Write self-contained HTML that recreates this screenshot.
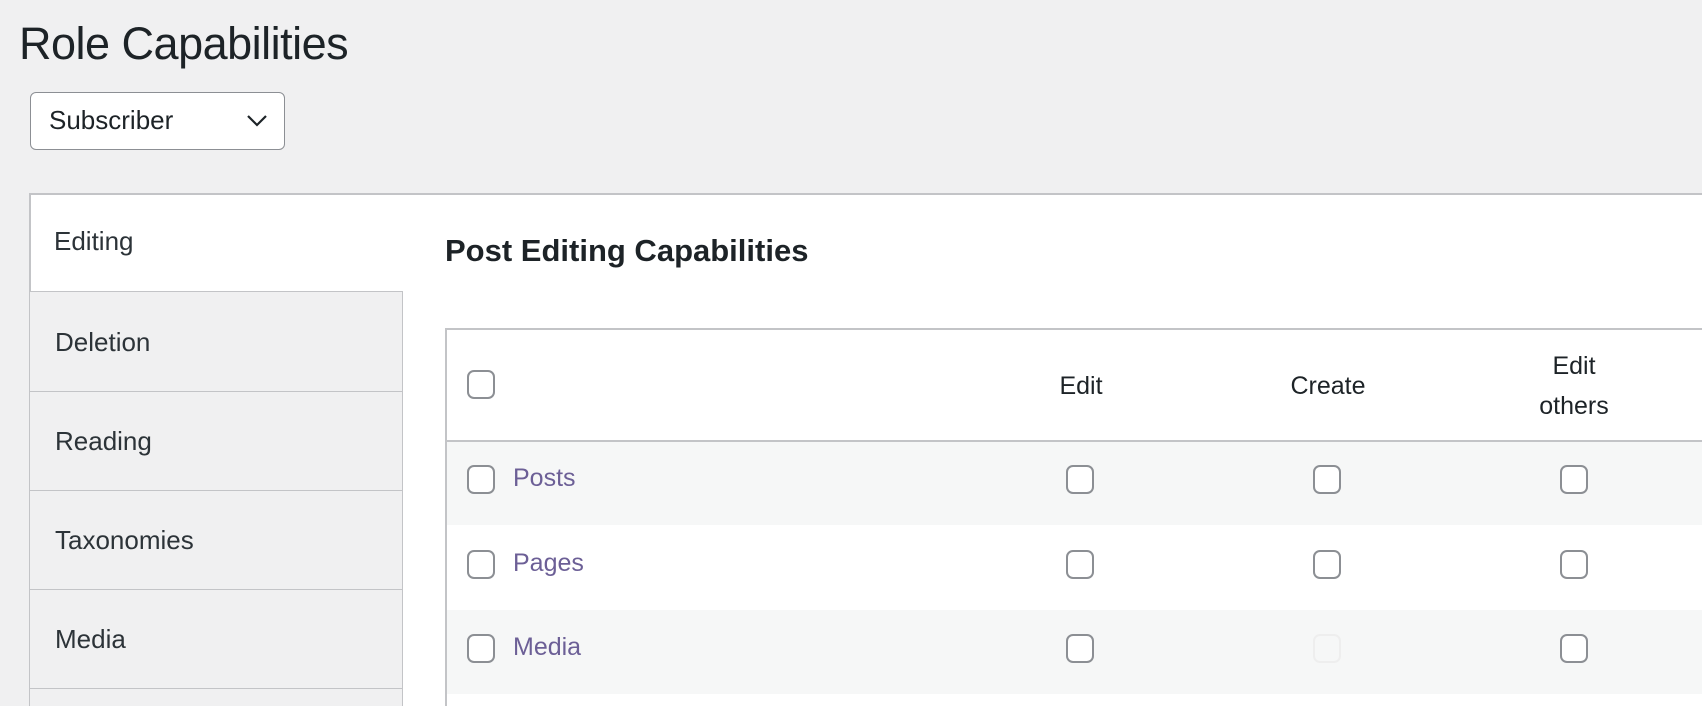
<!DOCTYPE html>
<html><head><style>
html,body{margin:0;width:1702px;height:706px;overflow:hidden}
body{background:#f0f0f1;font-family:"Liberation Sans",sans-serif;color:#1d2327;position:relative}
.a{position:absolute}
h1{position:absolute;left:19px;top:18px;margin:0;font-size:45px;font-weight:400;letter-spacing:-0.5px}
.sel{left:30px;top:92px;width:255px;height:58px;border:1.5px solid #8c8f94;border-radius:6px;background:#fff;box-sizing:border-box;font-size:26px;line-height:55px;padding-left:18px}
.panel{left:29px;top:193px;width:1673px;height:513px;background:#fff;border:2px solid #c3c4c7;border-bottom:0;border-right:0;box-sizing:border-box}
.tab{position:absolute;left:29px;width:374px;background:#f0f0f1;border:1.5px solid #c3c4c7;box-sizing:border-box;font-size:26px;padding-left:25px;color:#2c3338}
.cb{position:absolute;width:28px;height:29px;border:2px solid #8c8f94;border-radius:7px;box-sizing:border-box;background:#fff}
.row{position:absolute;width:1255px;height:85px}
.lbl{position:absolute;font-size:25px;color:#6c5f96}
.th{position:absolute;font-size:25px;text-align:center;line-height:40px;color:#1d2327}
</style></head><body>
<h1>Role Capabilities</h1>
<div class="a sel">Subscriber<svg class="a" style="left:215px;top:21px" width="22" height="13" viewBox="0 0 22 13"><path d="M2 2l9 9 9-9" stroke="#1d2327" stroke-width="2.2" fill="none"/></svg></div>
<div class="a panel"></div>
<div class="a" style="left:54px;top:226px;font-size:26px;color:#2c3338">Editing</div>
<div class="tab" style="top:291px;height:101px;line-height:100px">Deletion</div>
<div class="tab" style="top:391px;height:100px;line-height:98px">Reading</div>
<div class="tab" style="top:490px;height:100px;line-height:98px">Taxonomies</div>
<div class="tab" style="top:589px;height:100px;line-height:98px">Media</div>
<div class="tab" style="top:688px;height:18px;border-bottom:0"></div>
<div class="a" style="left:445px;top:233px;font-size:31px;font-weight:700">Post Editing Capabilities</div>
<div class="a" style="left:445px;top:328px;width:1257px;height:378px;border:2px solid #c3c4c7;border-right:0;border-bottom:0;box-sizing:border-box;background:#fff"></div>
<div class="a" style="left:447px;top:440px;width:1255px;height:2px;background:#c3c4c7"></div>
<div class="cb" style="left:467px;top:370px"></div>
<div class="th" style="left:1031px;top:366px;width:100px">Edit</div>
<div class="th" style="left:1268px;top:366px;width:120px">Create</div>
<div class="th" style="left:1514px;top:346px;width:120px">Edit<br>others</div>
<div class="row" style="left:447px;top:442px;height:83px;background:#f6f7f7"></div>
<div class="row" style="left:447px;top:610px;height:84px;background:#f6f7f7"></div>
<div class="cb" style="left:467px;top:465px"></div><div class="lbl" style="left:513px;top:464px">Posts</div>
<div class="cb" style="left:467px;top:550px"></div><div class="lbl" style="left:513px;top:549px">Pages</div>
<div class="cb" style="left:467px;top:634px"></div><div class="lbl" style="left:513px;top:633px">Media</div>
<div class="cb" style="left:1066px;top:465px"></div><div class="cb" style="left:1313px;top:465px"></div><div class="cb" style="left:1560px;top:465px"></div>
<div class="cb" style="left:1066px;top:550px"></div><div class="cb" style="left:1313px;top:550px"></div><div class="cb" style="left:1560px;top:550px"></div>
<div class="cb" style="left:1066px;top:634px"></div><div class="cb" style="left:1313px;top:634px;border-color:#eeeeee;background:#f6f7f7"></div><div class="cb" style="left:1560px;top:634px"></div>
</body></html>
